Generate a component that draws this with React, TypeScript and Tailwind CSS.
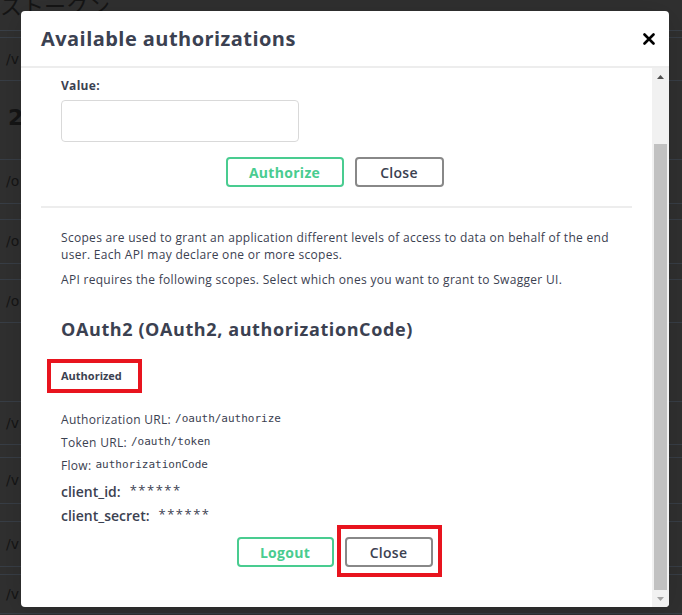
import React from 'react';

const ink = 'text-[#3b4151]';

// faint rows of the page behind the overlay
const bgRows: { mt: number; h: number; text: string; big?: boolean }[] = [
  { mt: 6, h: 44, text: '/v' },
  { mt: 0, h: 73, text: '2', big: true },
  { mt: 5, h: 45, text: '/o' },
  { mt: 15, h: 45, text: '/o' },
  { mt: 15, h: 44, text: '/o' },
  { mt: 78, h: 44, text: '/v' },
  { mt: 12, h: 47, text: '/v' },
  { mt: 17, h: 46, text: '/v' },
  { mt: 7, h: 40, text: '/v' },
];

const Background: React.FC = () => (
  <div className="h-[615px] w-full overflow-hidden bg-[#303030]">
    <div className="h-[37px] border-b border-[#3a4048] text-[22px] leading-[20px] text-[#151515] font-['Noto_Sans_CJK_JP',sans-serif]">
      <div className="-mt-[6px]">ストークン</div>
    </div>
    {bgRows.map((r, i) => (
      <div
        key={i}
        style={{ marginTop: r.mt, height: r.h }}
        className={`flex items-center border-y border-[#383e46] pl-[6px] text-[#151515] font-['DejaVu_Sans',sans-serif] ${r.big ? 'border-transparent text-[22px] font-bold pl-[8px]' : 'text-[14px]'}`}
      >
        {r.text}
      </div>
    ))}
    <div className="flex text-[14px] text-[#151515] font-['Noto_Sans_CJK_JP',sans-serif] leading-[16px]">
      <span className="ml-[12px]">(I</span>
      <span className="ml-[370px]">入力項目に値を設定</span>
    </div>
  </div>
);

const Scrollbar: React.FC = () => (
  <div className="flex w-[17px] shrink-0 flex-col bg-[#f1f1f1]">
    <div className="flex h-[17px] items-center justify-center">
      <svg width="7" height="4" viewBox="0 0 7 4">
        <path d="M0 4 L3.5 0 L7 4 Z" fill="#505050" />
      </svg>
    </div>
    <div className="mt-[59px] mx-[2px] h-[446px] bg-[#c1c1c1]" />
    <div className="flex h-[17px] items-center justify-center">
      <svg width="7" height="4" viewBox="0 0 7 4">
        <path d="M0 0 L3.5 4 L7 0 Z" fill="#a3a3a3" />
      </svg>
    </div>
  </div>
);

const Btn: React.FC<{ label: string; green?: boolean; w: number }> = ({ label, green, w }) => (
  <button
    style={{ width: w }}
    className={`h-[30px] rounded-[4px] border-2 bg-white text-[14px] font-bold tracking-[0.3px] ${
      green ? 'border-[#49cc90] text-[#49cc90]' : 'border-[#888888] text-[#3b4151] font-semibold'
    }`}
  >
    {label}
  </button>
);

const App: React.FC = () => {
  return (
    <div className="relative h-[615px] w-[682px] overflow-hidden font-['Open_Sans',sans-serif]">
      <Background />

      {/* modal */}
      <div className="absolute left-[21px] top-[11px] flex h-[596px] w-[648px] flex-col overflow-hidden rounded-[4px] bg-white shadow-[0_4px_30px_rgba(0,0,0,0.15)]">
        <div className="flex h-[57px] shrink-0 items-center justify-between border-b-2 border-[#ededed] pl-[20px] pr-[14px]">
          <h3 className={`text-[20px] font-bold tracking-[0.45px] ${ink} pt-[1px]`}>Available authorizations</h3>
          <svg width="12" height="12" viewBox="0 0 12 12" className="mt-[1px]">
            <path d="M1.5 1.5 L10.5 10.5 M10.5 1.5 L1.5 10.5" stroke="#000" strokeWidth="2.6" strokeLinecap="round" />
          </svg>
        </div>

        <div className="flex min-h-0 flex-1">
          <div className="flex-1 px-[20px]">
            <div className="px-[20px]">
              <label className={`mt-[9px] block h-[17px] text-[12px] font-bold leading-[17px] tracking-[0.3px] ${ink}`}>Value:</label>
              <div className="mt-[6px] h-[42px] w-[238px] rounded-[4px] border border-[#d9d9d9] bg-white" />
              <div className="mt-[15px] flex justify-center gap-[11px] pr-[4px]">
                <Btn label="Authorize" green w={118} />
                <Btn label="Close" w={89} />
              </div>
            </div>

            <div className="mt-[19px] h-[2px] bg-[#ededed]" />

            <div className={`px-[20px] text-[12px] tracking-[0.3px] ${ink}`}>
              <p className="mt-[21px] leading-[17px]">
                Scopes are used to grant an application different levels of access to data on behalf of the end
                user. Each API may declare one or more scopes.
              </p>
              <p className="mt-[8px] leading-[17px]">
                API requires the following scopes. Select which ones you want to grant to Swagger UI.
              </p>

              <h4 className="mt-[29px] h-[24px] text-[18px] font-bold leading-[24px] tracking-[0.6px]">
                OAuth2 (OAuth2, authorizationCode)
              </h4>

              <div className="-ml-[14px] mt-[18px] flex h-[34px] w-[95px] items-center border-4 border-[#e8141e] pl-[10px]">
                <span className="text-[11px] font-bold tracking-normal">Authorized</span>
              </div>

              <div className="mt-[15px]">
                <div className="flex h-[23px] items-center gap-[4px]">
                  <span>Authorization URL:</span>
                  <code className="font-['DejaVu_Sans_Mono',monospace] text-[11px] tracking-normal">/oauth/authorize</code>
                </div>
                <div className="flex h-[23px] items-center gap-[4px]">
                  <span>Token URL:</span>
                  <code className="font-['DejaVu_Sans_Mono',monospace] text-[11px] tracking-normal">/oauth/token</code>
                </div>
                <div className="flex h-[23px] items-center gap-[4px]">
                  <span>Flow:</span>
                  <code className="font-['DejaVu_Sans_Mono',monospace] text-[11px] tracking-normal">authorizationCode</code>
                </div>
                <div className="mt-[2px] flex h-[24px] items-center gap-[9px]">
                  <span className="text-[14px] font-semibold tracking-normal">client_id:</span>
                  <span className="text-[13px] tracking-[1.5px]">******</span>
                </div>
                <div className="flex h-[24px] items-center gap-[9px]">
                  <span className="text-[14px] font-semibold tracking-normal">client_secret:</span>
                  <span className="text-[13px] tracking-[1.5px]">******</span>
                </div>
              </div>

              <div className="mt-[10px] flex justify-center gap-[11px] pr-[4px]">
                <Btn label="Logout" green w={97} />
                <div className="relative">
                  <Btn label="Close" w={88} />
                  <div className="absolute -bottom-[10px] -left-[8px] -right-[9px] -top-[12px] border-4 border-[#e8141e]" />
                </div>
              </div>
            </div>
          </div>
          <Scrollbar />
        </div>
      </div>
    </div>
  );
};

export default App;
